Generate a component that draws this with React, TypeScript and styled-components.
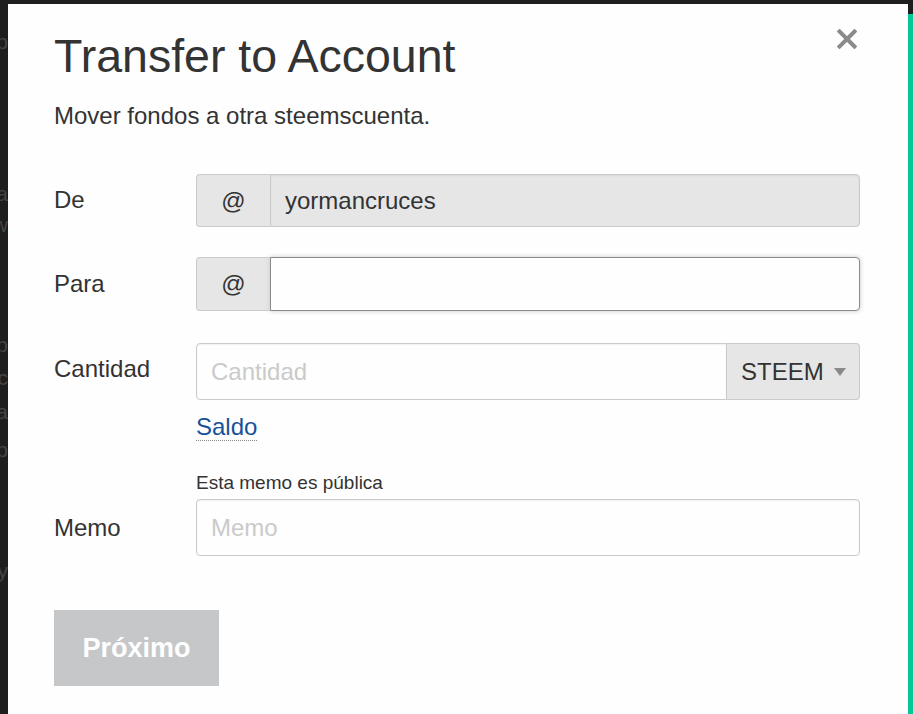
import styled, { createGlobalStyle } from "styled-components";

const GlobalStyle = createGlobalStyle`
  html, body {
    margin: 0;
    padding: 0;
    background: #1e1e1e;
    overflow: hidden;
  }
  body {
    font-family: "Liberation Sans", Arial, sans-serif;
    color: #333;
  }
  * {
    box-sizing: border-box;
  }
`;

const Page = styled.div`
  display: grid;
  grid-template-columns: 8px 900px 5px;
  height: 714px;
  overflow: hidden;
`;

// the page behind the overlay, only a sliver of it shows on the left
const Backdrop = styled.div`
  padding-top: 30px;
  overflow: hidden;
  color: #444;
  font-size: 21px;
`;

const BackLine = styled.div<{ $gap: number }>`
  display: flex;
  justify-content: flex-end;
  white-space: nowrap;
  height: 28px;
  margin-top: ${(p) => p.$gap}px;
`;

const SideStripe = styled.div`
  margin-top: 14px;
  background: #00c896;
`;

const Modal = styled.div`
  margin-top: 4px;
  background: #fefefe;
  padding: 24px 48px 0 46px;
`;

const Header = styled.div`
  display: flex;
  justify-content: space-between;
  align-items: flex-start;
`;

const Title = styled.h2`
  margin: 0;
  font-size: 46.5px;
  line-height: 56px;
  font-weight: 400;
  color: #333;
`;

const CloseButton = styled.button`
  border: 0;
  background: none;
  padding: 0;
  margin: 1px 3px 0 0;
  width: 20px;
  height: 20px;
  cursor: pointer;
  svg {
    display: block;
  }
`;

const Subtitle = styled.p`
  margin: 14px 0 0;
  font-size: 24px;
  line-height: 36px;
`;

const Form = styled.form`
  margin-top: 40px;
  display: flex;
  flex-direction: column;
`;

const Row = styled.div<{ $gap: number }>`
  display: grid;
  grid-template-columns: 142px 1fr;
  margin-bottom: ${(p) => p.$gap}px;
`;

const Label = styled.label<{ $h: number; $end?: boolean }>`
  font-size: 24px;
  line-height: ${(p) => p.$h}px;
  align-self: ${(p) => (p.$end ? "end" : "start")};
`;

const Field = styled.div`
  display: flex;
  flex-direction: column;
`;

const Group = styled.div<{ $h: number }>`
  display: flex;
  height: ${(p) => p.$h}px;
`;

const Addon = styled.span`
  width: 74px;
  flex: none;
  display: flex;
  align-items: center;
  justify-content: center;
  background: #e6e6e6;
  border: 1px solid #cacaca;
  border-right: 0;
  border-radius: 4px 0 0 4px;
  font-size: 24px;
  color: #333;
`;

const Input = styled.input<{ $joined?: "left" | "right"; $focus?: boolean }>`
  flex: 1;
  min-width: 0;
  height: 100%;
  padding: 0 14px;
  font-family: inherit;
  font-size: 24px;
  color: #333;
  background: ${(p) => (p.readOnly ? "#e6e6e6" : "#fefefe")};
  border: 1px solid ${(p) => (p.$focus ? "#8a8a8a" : "#cacaca")};
  border-radius: ${(p) =>
    p.$joined === "left" ? "0 4px 4px 0" : p.$joined === "right" ? "4px 0 0 4px" : "4px"};
  box-shadow: ${(p) => (p.$focus ? "0 0 5px #cacaca" : "inset 0 1px 2px rgba(10,10,10,0.06)")};
  outline: none;
  &::placeholder {
    color: #cacaca;
  }
`;

const Select = styled.div`
  width: 133px;
  flex: none;
  display: flex;
  align-items: center;
  justify-content: space-between;
  padding: 0 13px 0 14px;
  background: #e6e6e6;
  border: 1px solid #cacaca;
  border-left: 0;
  border-radius: 0 4px 4px 0;
  font-size: 24px;
  color: #333;
`;

const Caret = styled.span`
  width: 0;
  height: 0;
  border-left: 6px solid transparent;
  border-right: 6px solid transparent;
  border-top: 8px solid #8a8a8a;
`;

const BalanceLink = styled.a`
  align-self: flex-start;
  margin-top: 9px;
  font-size: 24px;
  line-height: 36px;
  color: #1a5099;
  text-decoration: none;
  span {
    border-bottom: 1px dotted #8a8a8a;
  }
`;

const Help = styled.div`
  font-size: 19px;
  line-height: 24px;
  color: #333;
  margin-bottom: 4px;
`;

const Submit = styled.button`
  align-self: flex-start;
  width: 165px;
  height: 76px;
  border: 0;
  background: #c6c7c9;
  color: #fefefe;
  font-family: inherit;
  font-size: 27px;
  font-weight: 700;
  cursor: not-allowed;
`;

export default function App() {
  const back = [
    { t: "p", g: 0 },
    { t: "a", g: 124 },
    { t: "w", g: 3 },
    { t: "b", g: 92 },
    { t: "c", g: 5 },
    { t: "a", g: 6 },
    { t: "p", g: 10 },
    { t: "ny", g: 93 },
  ];
  return (
    <>
      <GlobalStyle />
      <Page>
        <Backdrop aria-hidden="true">
          {back.map((l, i) => (
            <BackLine key={i} $gap={l.g}>
              <span>{l.t}</span>
            </BackLine>
          ))}
        </Backdrop>
        <Modal>
          <Header>
            <Title>Transfer to Account</Title>
            <CloseButton aria-label="Cerrar">
              <svg width="20" height="20" viewBox="0 0 20 20">
                <path
                  d="M2.5 2.5 L17.5 17.5 M17.5 2.5 L2.5 17.5"
                  stroke="#8a8a8a"
                  strokeWidth="4"
                  strokeLinecap="square"
                />
              </svg>
            </CloseButton>
          </Header>
          <Subtitle>Mover fondos a otra steemscuenta.</Subtitle>
          <Form onSubmit={(e) => e.preventDefault()}>
            <Row $gap={30}>
              <Label $h={51}>De</Label>
              <Group $h={53}>
                <Addon>@</Addon>
                <Input $joined="left" readOnly value="yormancruces" />
              </Group>
            </Row>
            <Row $gap={32}>
              <Label $h={54}>Para</Label>
              <Group $h={54}>
                <Addon>@</Addon>
                <Input $joined="left" $focus defaultValue="" />
              </Group>
            </Row>
            <Row $gap={26}>
              <Label $h={52}>Cantidad</Label>
              <Field>
                <Group $h={57}>
                  <Input $joined="right" placeholder="Cantidad" />
                  <Select>
                    STEEM
                    <Caret />
                  </Select>
                </Group>
                <BalanceLink href="#">
                  <span>Saldo</span>
                </BalanceLink>
              </Field>
            </Row>
            <Row $gap={54}>
              <Label $h={57} $end>
                Memo
              </Label>
              <Field>
                <Help>Esta memo es pública</Help>
                <Group $h={57}>
                  <Input placeholder="Memo" />
                </Group>
              </Field>
            </Row>
            <Submit type="submit" disabled>
              Próximo
            </Submit>
          </Form>
        </Modal>
        <SideStripe />
      </Page>
    </>
  );
}
